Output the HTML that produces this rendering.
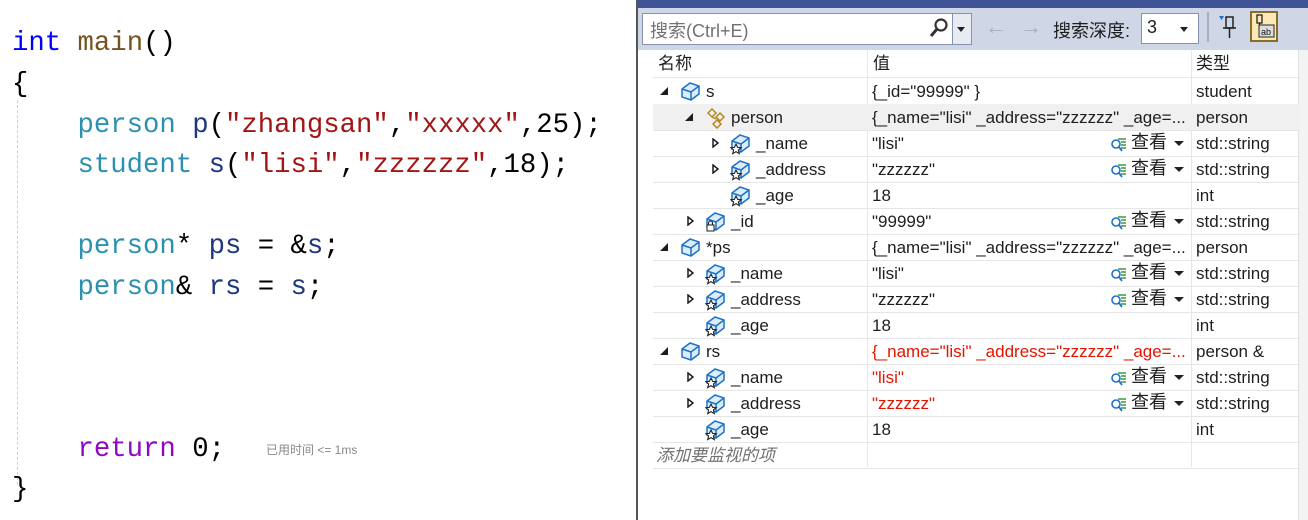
<!DOCTYPE html>
<html><head><meta charset="utf-8"><style>
body{margin:0;width:1308px;height:520px;position:relative;overflow:hidden;background:#fff;font-family:"Liberation Sans","Noto Sans CJK SC",sans-serif}
.code{position:absolute;font-family:"Liberation Mono","Noto Sans CJK SC",monospace;font-size:27.3px;white-space:pre;line-height:41px}
.kw{color:#0000ff}.fn{color:#74531f}.ty{color:#2b91af}.st{color:#a31515}.vr{color:#1f377f}.rt{color:#8f08c4}.pl{color:#000}
.guide{position:absolute;left:17px;top:100px;height:385px;border-left:1px dashed #cfcfcf}
.panel{position:absolute;left:636px;top:0;width:672px;height:520px;background:#fff;border-left:2px solid #555}
.title{position:absolute;left:0;top:0;width:672px;height:8px;background:#3e5497}
.tb{position:absolute;left:0;top:8px;width:672px;height:42px;background:#cfd6e5}
.cell{position:absolute;font-size:17px;height:26px;line-height:27px;white-space:nowrap;color:#1e1e1e}
.row{position:absolute;left:15px;width:647px;height:26px;border-bottom:1px solid #e6e6e6}
.vl{position:absolute;top:50px;height:417px;border-left:1px solid #e6e6e6}
</style></head><body>
<div class="guide"></div>
<div class="code" style="left:12px;top:23px"><span class="kw">int</span> <span class="fn">main</span><span class="pl">()</span></div>
<div class="code pl" style="left:12px;top:64px">{</div>
<div class="code" style="left:12px;top:105px">    <span class="ty">person</span> <span class="vr">p</span><span class="pl">(</span><span class="st">"zhangsan"</span><span class="pl">,</span><span class="st">"xxxxx"</span><span class="pl">,25);</span></div>
<div class="code" style="left:12px;top:145px">    <span class="ty">student</span> <span class="vr">s</span><span class="pl">(</span><span class="st">"lisi"</span><span class="pl">,</span><span class="st">"zzzzzz"</span><span class="pl">,18);</span></div>
<div class="code" style="left:12px;top:226px">    <span class="ty">person</span><span class="pl">* </span><span class="vr">ps</span><span class="pl"> = &amp;</span><span class="vr">s</span><span class="pl">;</span></div>
<div class="code" style="left:12px;top:267px">    <span class="ty">person</span><span class="pl">&amp; </span><span class="vr">rs</span><span class="pl"> = </span><span class="vr">s</span><span class="pl">;</span></div>
<div class="code" style="left:12px;top:429px">    <span class="rt">return</span> <span class="pl">0;</span></div>
<div style="position:absolute;left:266px;top:441px;font-size:12px;color:#888">已用时间 &lt;= 1ms</div>
<div class="code pl" style="left:12px;top:469px">}</div>

<div class="panel">
<div class="title"></div>
<div class="tb">
 <div style="position:absolute;left:4px;top:5px;width:328px;height:30px;background:#fff;border:1px solid #8592b0"></div>
 <div style="position:absolute;left:12px;top:9px;font-size:18px;color:#717171">搜索(Ctrl+E)</div>
 <svg style="position:absolute;left:290px;top:9px" width="22" height="22"><circle cx="13" cy="8" r="5.5" fill="none" stroke="#333" stroke-width="2.2"/><path d="M9 12l-6 7" stroke="#333" stroke-width="3"/></svg>
 <div style="position:absolute;left:314px;top:6px;width:18px;height:30px;border-left:1px solid #8592b0;background:#e8ebf2"></div>
 <div style="position:absolute;left:319px;top:19px;border:4px solid transparent;border-top:5px solid #222"></div>
 <div style="position:absolute;left:347px;top:6px;font-size:22px;color:#a6aec0">←</div>
 <div style="position:absolute;left:382px;top:6px;font-size:22px;color:#a6aec0">→</div>
 <div style="position:absolute;left:415px;top:9px;font-size:18px;color:#1e1e1e">搜索深度:</div>
 <div style="position:absolute;left:503px;top:5px;width:56px;height:29px;background:#fff;border:1px solid #8592b0"></div>
 <div style="position:absolute;left:509px;top:9px;font-size:18px;color:#1e1e1e">3</div>
 <div style="position:absolute;left:542px;top:19px;border:4px solid transparent;border-top:5px solid #222"></div>
 <div style="position:absolute;left:569px;top:4px;height:30px;border-left:2px solid #a6aec0"></div>
 <svg style="position:absolute;left:579px;top:6px" width="24" height="26"><path d="M2 2h5l-2.5 4z" fill="#1a6fd1"/><rect x="9" y="3" width="7" height="11" fill="none" stroke="#222" stroke-width="1.5"/><path d="M6 14h13M12.5 14v10" stroke="#222" stroke-width="1.5"/></svg>
 <div style="position:absolute;left:612px;top:3px;width:28px;height:31px;background:#fce9b5;border:2px solid #8a6d2a;box-sizing:border-box"></div>
 <svg style="position:absolute;left:616px;top:6px" width="22" height="26"><rect x="3" y="1" width="5" height="8" fill="none" stroke="#222" stroke-width="1.3"/><path d="M5.5 9v6" stroke="#222"/><rect x="5" y="11" width="15" height="12" fill="#ddd" stroke="#222"/><text x="7" y="21" font-size="9" font-family="Liberation Sans" fill="#111">ab</text></svg>
</div>
<div style="position:absolute;left:660px;top:50px;width:12px;height:470px;background:#f3f3f3;border-left:1px solid #e0e0e0"></div>
<div class="vl" style="left:229px"></div>
<div class="vl" style="left:553px"></div>
<div class="row" style="top:50px;height:27px;border-bottom:1px solid #e6e6e6"></div>
<div class="cell" style="left:20px;top:50px">名称</div>
<div class="cell" style="left:235px;top:50px">值</div>
<div class="cell" style="left:558px;top:50px">类型</div>
<div id="rows"></div>
</div>
<svg width="0" height="0" style="position:absolute"><defs>
<g id="bx"><path d="M2 9l8-6 9 3v8l-8 6-9-3z" fill="#dcecfa" stroke="#1c72c9" stroke-width="1.5"/><path d="M2 9l9 3 8-6M11 12v8" fill="none" stroke="#1c72c9" stroke-width="1.5"/></g>
<g id="bxs"><use href="#bx"/><path d="M6 12l1.6 3.4 3.6.3-2.8 2.3.9 3.6-3.3-2-3.3 2 .9-3.6-2.8-2.3 3.6-.3z" fill="#fff" stroke="#222" stroke-width="1.1"/></g>
<g id="bxl"><use href="#bx"/><rect x="2" y="15" width="7" height="6" fill="#fff" stroke="#222"/><path d="M3.5 15v-2a2 2 0 0 1 4 0v2" fill="none" stroke="#222"/></g>
<g id="inh"><path d="M3 7l4-4 4 4-4 4zM11 11l4-4 4 4-4 4zM8 18l4-4 4 4-4 4zM7 11l4 2M12 15l1-1" fill="none" stroke="#b8861c" stroke-width="1.5"/></g>
</defs></svg>
<script>
const R=[
[0,'e','bx','s','{_id="99999" }','student',0,0],
[1,'e','inh','person','{_name="lisi" _address="zzzzzz" _age=...','person',0,0,1],
[2,'c','bxs','_name','"lisi"','std::string',1,0],
[2,'c','bxs','_address','"zzzzzz"','std::string',1,0],
[2,'','bxs','_age','18','int',0,0],
[1,'c','bxl','_id','"99999"','std::string',1,0],
[0,'e','bx','*ps','{_name="lisi" _address="zzzzzz" _age=...','person',0,0],
[1,'c','bxs','_name','"lisi"','std::string',1,0],
[1,'c','bxs','_address','"zzzzzz"','std::string',1,0],
[1,'','bxs','_age','18','int',0,0],
[0,'e','bx','rs','{_name="lisi" _address="zzzzzz" _age=...','person &',0,1],
[1,'c','bxs','_name','"lisi"','std::string',1,1],
[1,'c','bxs','_address','"zzzzzz"','std::string',1,1],
[1,'','bxs','_age','18','int',0,0]];
let h='';
R.forEach((r,i)=>{const y=78+i*26,lx=25*r[0];
 h+=`<div class="row" style="top:${y}px;${r[8]?'background:#f0f0f0;':''}"></div>`;
 if(r[1]=='e')h+=`<svg style="position:absolute;left:${22+lx}px;top:${y+8}px" width="10" height="10"><path d="M8 1v8H0z" fill="#1e1e1e"/></svg>`;
 if(r[1]=='c')h+=`<svg style="position:absolute;left:${24+lx}px;top:${y+8}px" width="8" height="10"><path d="M1 1l5 4-5 4z" fill="#fff" stroke="#1e1e1e" stroke-width="1.5"/></svg>`;
 h+=`<svg style="position:absolute;left:${42+lx}px;top:${y+2}px" width="22" height="23"><use href="#${r[2]}"/></svg>`;
 h+=`<div class="cell" style="left:${68+lx}px;top:${y}px">${r[3]}</div>`;
 h+=`<div class="cell" style="left:234px;top:${y}px;${r[7]?'color:#e51400':''}">${r[4]}</div>`;
 h+=`<div class="cell" style="left:558px;top:${y}px">${r[5]}</div>`;
 if(r[6])h+=`<svg style="position:absolute;left:472px;top:${y+6}px" width="20" height="18"><circle cx="6" cy="8" r="4" fill="none" stroke="#1c72c9" stroke-width="1.6"/><path d="M9 11l3 4" stroke="#1c72c9" stroke-width="1.8"/><path d="M8 3h8M11 6h5M11 9h5M11 12h5" stroke="#3a9b3a" stroke-width="1.4"/></svg><div class="cell" style="left:493px;top:${y-1}px;font-size:18px">查看</div><div style="position:absolute;left:536px;top:${y+11}px;border:5px solid transparent;border-top:5px solid #222"></div>`;
});
const y=78+14*26;
h+=`<div class="row" style="top:${y}px"></div><div class="cell" style="left:18px;top:${y}px;color:#717171;font-style:italic">添加要监视的项</div>`;
document.getElementById('rows').innerHTML=h;
</script>
</body></html>
